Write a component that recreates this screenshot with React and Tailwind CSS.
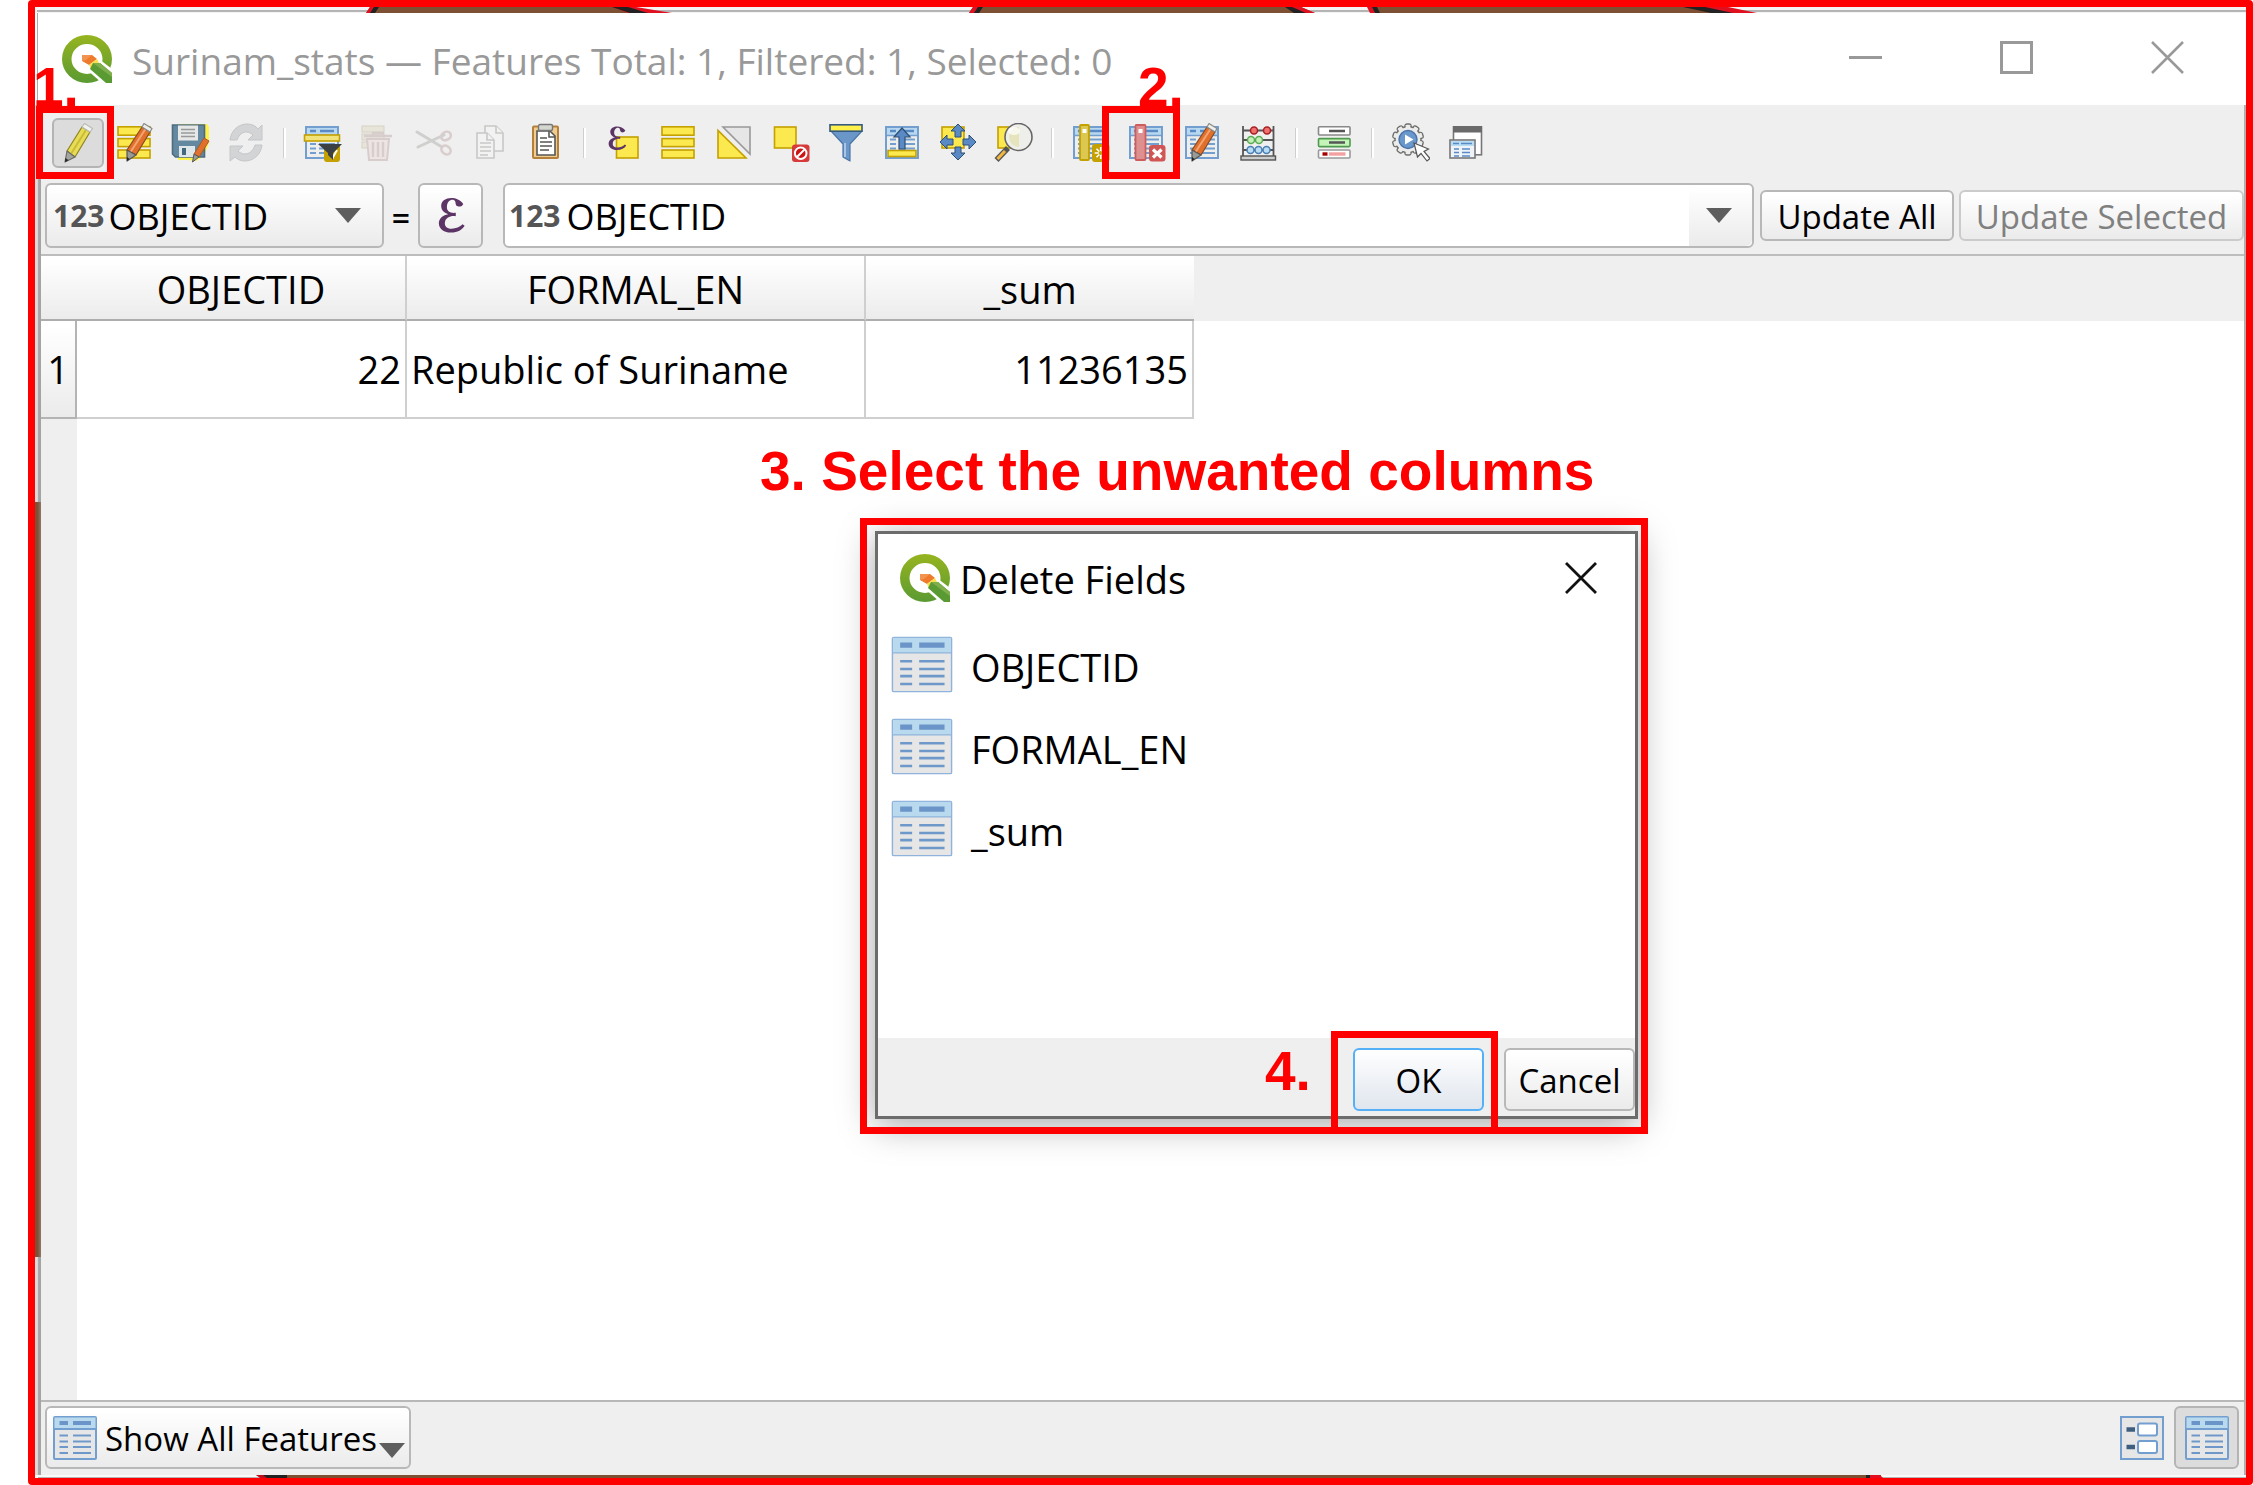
import React from "react";

const YELLOW = "#fce94f";
const GOLD = "#c4a000";
const BLUE = "#729fcf";
const DEEP = "#5a8ac6";

/* ---------- shared drawing parts (40 x 40 grid) ---------- */

function Icon({ children, faded }) {
  return (
    <svg viewBox="0 0 40 40" className={faded ? "size-10 shrink-0 opacity-30" : "size-10 shrink-0"} fill="none" aria-hidden="true">
      {children}
    </svg>
  );
}

function Sheet() {
  return (
    <g>
      <rect x="4" y="4" width="32" height="31" fill="#eeeeec" stroke={BLUE} strokeWidth="2" />
      <rect x="5" y="5" width="30" height="7" fill="#b8d8f0" />
      <path d="M4 12.500h32" stroke={BLUE} strokeWidth="1.500" />
      <path d="M8 8h6M18 8h14" stroke={DEEP} strokeWidth="2.600" />
      <path d="M8 16.500h6M17 16.500h16M8 21h6M17 21h16M8 25.500h6M17 25.500h16M8 30h6M17 30h16" stroke={BLUE} strokeWidth="1.800" />
    </g>
  );
}

function OrangePencil() {
  return (
    <g strokeLinejoin="round">
      <path d="M13 27 28 4l8 5-14 23-9-5z" fill="#e0702c" stroke="#8a4a20" strokeWidth="1.200" />
      <path d="M16.500 29 31.500 6" stroke="#f4a472" strokeWidth="2" />
      <path d="m28 4 2-3.500 8 5L36 9z" fill="#eeeeec" stroke="#888a85" strokeWidth="1.200" />
      <path d="m13 27 9 5-9 6z" fill="#9a9a96" stroke="#555753" strokeWidth="1.200" />
      <path d="m13 34 2.500 2L13 38z" fill="#222" />
    </g>
  );
}

const bars = (
  <g fill={YELLOW} stroke={GOLD} strokeWidth="1.600">
    <rect x="4" y="3.800" width="32" height="8.400" />
    <rect x="4" y="15.600" width="32" height="8" />
    <rect x="4" y="27" width="32" height="8" />
  </g>
);

const arrowPart = "M20 1l7 7h-4v6h-6V8h-4z";

/* ---------- toolbar icons ---------- */

const ToggleEdit = () => (
  <Icon>
    <g strokeLinejoin="round">
      <path d="M9 28 24 4l8 5-15 25-8-6z" fill="#e8dc55" stroke="#8f8420" strokeWidth="1.200" />
      <path d="M13.500 30 28 7" stroke="#c9bc3a" strokeWidth="2" />
      <path d="m24 4 2.500-3.500 8 5L32 9z" fill="#f2f2f0" stroke="#babdb6" strokeWidth="1.200" />
      <path d="m9 28 8 6-10 5z" fill="#a5a5a0" stroke="#6a6c68" strokeWidth="1.200" />
      <path d="m7.500 35 3 2.200L7 39z" fill="#222" />
    </g>
  </Icon>
);
const MultiEdit = () => (
  <Icon>
    {bars}
    <OrangePencil />
  </Icon>
);
const SaveEdits = () => (
  <Icon>
    <path d="M8 1h29l2 3v16l-5 13-8 5-8-1H8z" fill="#fff34a" />
    <path d="M2.500 2h32v32H5.500l-3-3z" fill="#6488a0" stroke="#4d6c80" strokeWidth="1.600" />
    <rect x="8" y="2.500" width="20" height="15" fill="#e6e8e8" />
    <path d="M11 6.500h14M11 10h14M11 13.500h14" stroke="#999" strokeWidth="1.300" />
    <rect x="9" y="23" width="16" height="11" fill="#dfe6ea" />
    <rect x="12" y="25" width="4" height="7" fill="#44697e" />
    <path d="M24 31 34 15l5 3-10 16z" fill="#e0702c" stroke="#a85a2a" strokeLinejoin="round" />
    <path d="m24 31 5 3-6.500 5z" fill="#9a9a96" stroke="#555753" />
  </Icon>
);
const Reload = () => (
  <Icon>
    <g fill="#d2d4d6" stroke="#c4c6c8" strokeWidth="1" strokeLinejoin="round">
      <path d="M4 17C5 7 13 1 21 1c5 0 9 2 11 5l4-4v15H22l5-5c-5-5-13-4-16 5z" />
      <path d="M36 22c-1 10-9 16-17 16-5 0-8-2-10-4l-5 4V23h13l-5 5c5 5 14 4 17-6z" />
    </g>
  </Icon>
);
const SelectForm = () => (
  <Icon>
    <Sheet />
    <rect x="2.500" y="12" width="35" height="6" fill="#f2e27a" stroke={GOLD} strokeWidth="1.600" />
    <rect x="22" y="21" width="16" height="18" rx="3" fill={GOLD} />
    <path d="M30 36l5-9" stroke="#fff" strokeWidth="2" />
    <path d="M16 21h24l-9 9v7l-5-5v-2z" fill="#3a4044" />
  </Icon>
);
const Trash = () => (
  <Icon faded>
    <rect x="4" y="3" width="22" height="6" fill="#d8d0a8" stroke="#a09060" />
    <rect x="4" y="11" width="22" height="6" fill="#d8d0a8" stroke="#a09060" />
    <rect x="4" y="19" width="22" height="6" fill="#d8d0a8" stroke="#a09060" />
    <path d="M9 16h22l-2 21H11z" fill="#eecccc" stroke="#a48080" strokeWidth="2" />
    <path d="M6 13h28M15 10h10v3H15zM15 19v15M20 19v15M25 19v15" stroke="#a48080" strokeWidth="2.400" />
  </Icon>
);
const Cut = () => (
  <Icon faded>
    <path d="M3 9 28 24M4 24l26-12" stroke="#888a85" strokeWidth="3" strokeLinecap="round" />
    <ellipse cx="32" cy="13" rx="5" ry="4" stroke="#a88080" strokeWidth="2.600" transform="rotate(-30 32 13)" />
    <ellipse cx="32" cy="27" rx="5" ry="4" stroke="#a88080" strokeWidth="2.600" transform="rotate(40 32 27)" />
  </Icon>
);
const Copy = () => (
  <Icon faded>
    <g fill="#fafafa" stroke="#6e706c" strokeWidth="1.600">
      <path d="M15 3h11l7 7v18H15z" />
      <path d="M26 3v7h7M7 10h10l7 7v18H7z" />
      <path d="M17 10v7h7" />
    </g>
    <path d="M10 20h11M10 24h11M10 28h11M10 32h8" stroke="#6e706c" strokeWidth="1.600" />
  </Icon>
);
const Paste = () => (
  <Icon>
    <rect x="7" y="3.500" width="25" height="31.500" rx="1" fill="#f0cc90" stroke="#b5803a" strokeWidth="2" />
    <path d="M11 8h13l5 5v19H11z" fill="#fff" stroke="#555753" strokeWidth="1.600" />
    <path d="M23 8v6h6" stroke="#555753" strokeWidth="1.600" />
    <rect x="12.500" y="1.500" width="14" height="6" rx="1.500" fill="#d3d7cf" stroke="#777" strokeWidth="1.400" />
    <path d="M14 15h7M14 19h12M14 23h12M14 27h9" stroke="#555753" strokeWidth="1.500" />
  </Icon>
);
const EPS = "M24 6C19-1 6 1 8 9c.5 2.500 3 4 5 4.500C3 15 4 27 15 27c5 0 8-2 10-5l-1.500-1C20 25 10 26 10.500 20c.3-4 4-5.500 8-5v-2.500c-4 .5-6.500-1-6.500-4C12 2.500 17 2 18 4c.7 1.500 0 3 2 3.800 1.600.5 3.500-.3 4-1.800z";
const SelectExpr = () => (
  <Icon>
    <rect x="14.500" y="14" width="21.500" height="21" fill={YELLOW} stroke={GOLD} strokeWidth="1.600" />
    <path d={EPS} fill="#5c3566" transform="translate(1 2) scale(.93)" />
  </Icon>
);
const SelectAll = () => <Icon>{bars}</Icon>;
const Invert = () => (
  <Icon>
    <path d="M9 4h27v27z" fill="#e6e6e6" stroke="#999" strokeWidth="1.600" />
    <path d="M4 7.500V35h28z" fill={YELLOW} stroke={GOLD} strokeWidth="1.600" />
  </Icon>
);
const Deselect = () => (
  <Icon>
    <rect x="4.500" y="4" width="21.500" height="21" fill={YELLOW} stroke={GOLD} strokeWidth="1.600" />
    <rect x="22" y="21.500" width="17.500" height="17.500" rx="3" fill="#d63a3a" />
    <circle cx="30.700" cy="30.200" r="5.800" fill="#cc1414" stroke="#fff" strokeWidth="2" />
    <path d="m27 34 7.500-7.500" stroke="#fff" strokeWidth="2" />
  </Icon>
);
const Filter = () => (
  <Icon>
    <path d="M5 8h31L24 21v17l-7-4V21z" fill="#6a97c8" stroke="#4a76a8" strokeWidth="1.200" strokeLinejoin="round" />
    <path d="M19 20v14" stroke="#a9c6e4" strokeWidth="2" />
    <rect x="4" y="1.800" width="32" height="6.400" fill="#fff04a" stroke="#35597f" strokeWidth="1.600" />
  </Icon>
);
const MoveTop = () => (
  <Icon>
    <Sheet />
    <rect x="6" y="27.500" width="28" height="6" fill={YELLOW} stroke={GOLD} strokeWidth="1.600" />
    <path d="M20 5l8 9h-5v12h-6V14h-5z" fill={DEEP} stroke="#2f4f73" strokeWidth="1.200" />
  </Icon>
);
const PanTo = () => (
  <Icon>
    <rect x="4" y="4" width="22" height="21" fill={YELLOW} stroke={GOLD} strokeWidth="1.600" />
    <g fill={DEEP} stroke="#2f4f73" strokeWidth="1">
      <path d={arrowPart} />
      <path d={arrowPart} transform="rotate(90 20 19)" />
      <path d={arrowPart} transform="rotate(180 20 19)" />
      <path d={arrowPart} transform="rotate(270 20 19)" />
    </g>
  </Icon>
);
const ZoomTo = () => (
  <Icon>
    <rect x="4" y="4" width="22" height="21" fill={YELLOW} stroke={GOLD} strokeWidth="1.600" />
    <path d="M2.500 37 14 25" stroke="#555" strokeWidth="5.500" />
    <path d="M3.500 36 11 28" stroke="#f0b840" strokeWidth="3" />
    <circle cx="24.500" cy="14" r="13.500" fill="#eeeeea" stroke="#666" strokeWidth="1.600" />
    <path d="M25 4v20a10 10 0 0 1-10-10 10 10 0 0 1 10-10z" fill="#e6e4bc" />
    <ellipse cx="20" cy="8" rx="6" ry="4" fill="#fff" opacity=".7" />
  </Icon>
);
const NewField = () => (
  <Icon>
    <Sheet />
    <rect x="10" y="2" width="9" height="35" rx="1" fill="#dcc850" stroke={GOLD} strokeWidth="1.800" />
    <rect x="12.500" y="6" width="4" height="4" fill="#fff" />
    <rect x="22" y="21" width="17.500" height="18" rx="3" fill={GOLD} />
    <path d="M30.700 24v12M24.700 30h12M26.500 25.800l8.500 8.500M35 25.800l-8.500 8.500" stroke="#fff" strokeWidth="1.600" />
    <circle cx="30.700" cy="30" r="2" fill={GOLD} />
  </Icon>
);
const DeleteField = () => (
  <Icon>
    <Sheet />
    <rect x="9.500" y="2" width="10" height="35" rx="1" fill="#de9090" stroke="#cf5c5c" strokeWidth="1.800" />
    <rect x="12.500" y="6" width="4" height="4" fill="#fff" />
    <rect x="23" y="22" width="16.500" height="16.500" rx="3" fill="#d25555" />
    <path d="m27 26.500 8.500 8M35.500 26.500l-8.500 8" stroke="#fff" strokeWidth="3.200" />
  </Icon>
);
const OrganizeCols = () => (
  <Icon>
    <Sheet />
    <g transform="translate(-3 0)">
      <OrangePencil />
    </g>
  </Icon>
);
const Calculator = () => (
  <Icon>
    <path d="M5 3v31M35.500 3v31M5 7.500h30M5 17h30M5 27h30" stroke="#555" strokeWidth="1.800" />
    <rect x="3" y="33" width="34.500" height="4" fill="#ccc" stroke="#555" strokeWidth="1.400" />
    <g strokeWidth="1.500">
      <circle cx="16" cy="7.500" r="3.500" fill="#f07070" stroke="#a82020" />
      <circle cx="29" cy="7.500" r="3.500" fill="#f07070" stroke="#a82020" />
      <circle cx="13" cy="17" r="3.500" fill="#c4f0b8" stroke="#5cab55" />
      <circle cx="21" cy="17" r="3.500" fill="#c4f0b8" stroke="#5cab55" />
      <circle cx="12.500" cy="27" r="3.500" fill="#b8dcf4" stroke="#4a7fb5" />
      <circle cx="20.500" cy="27" r="3.500" fill="#b8dcf4" stroke="#4a7fb5" />
      <circle cx="28.500" cy="27" r="3.500" fill="#b8dcf4" stroke="#4a7fb5" />
    </g>
  </Icon>
);
const Conditional = () => (
  <Icon>
    <g strokeWidth="1.600">
      <rect x="4.500" y="3.800" width="31.500" height="8.200" rx="1" fill="#fff" stroke="#888" />
      <rect x="4.500" y="15.600" width="31.500" height="8" rx="1" fill="#c4f4b8" stroke="#4e9a4e" />
      <rect x="4.500" y="27" width="31.500" height="8" rx="1" fill="#fff" stroke="#999" />
    </g>
    <path d="M15 8h16M15 19.500h16" stroke="#555" strokeWidth="2.600" />
    <path d="M8.500 31h5" stroke="#a40000" strokeWidth="3.400" />
    <path d="M15 31h16.500" stroke="#f4a0a0" strokeWidth="3.400" />
  </Icon>
);
const GEAR_ANGLES = [0, 36, 72, 108, 144, 180, 216, 252, 288, 324];
const Action = () => (
  <Icon>
    <g fill="#ececec" stroke="#6e706c" strokeWidth="1.400">
      {GEAR_ANGLES.map((a) => (
        <rect key={a} x="15" y="1" width="6" height="6" rx="2" transform={`rotate(${a} 18 16.500)`} />
      ))}
      <circle cx="18" cy="16.500" r="13" />
    </g>
    <g fill="#ececec">
      {GEAR_ANGLES.map((a) => (
        <rect key={a} x="15.700" y="2" width="4.600" height="6" transform={`rotate(${a} 18 16.500)`} />
      ))}
    </g>
    <circle cx="18" cy="16.500" r="9" fill="#6a97cc" stroke="#4a74a8" strokeWidth="1.400" />
    <path d="m15 11.500 8.500 5-8.500 5z" fill="#fff" />
    <path d="m24 20 3.500 14 3.500-3.500 6 7.500 3-2.500-6-7 4.500-2.500z" fill="#fff" stroke="#555" strokeWidth="1.200" />
  </Icon>
);
const Dock = () => (
  <Icon>
    <rect x="7.500" y="3.800" width="28" height="28" fill="#fff" stroke="#777" strokeWidth="1.600" />
    <rect x="7" y="3" width="29" height="6.500" fill="#6a6a6a" />
    <rect x="4" y="17" width="25" height="18" fill="#eef3f8" stroke="#777" strokeWidth="1.600" />
    <rect x="5" y="18" width="23" height="5" fill="#b8dcf4" />
    <path d="M7 20.500h6M15 20.500h11M8 26h5M16 26h8M8 29.500h5M16 29.500h8M8 33h5M16 33h8" stroke={DEEP} strokeWidth="1.700" />
  </Icon>
);

const TOOL_GROUPS = [
  [
    ["Toggle editing mode", ToggleEdit],
    ["Toggle multi edit mode", MultiEdit],
    ["Save edits", SaveEdits],
    ["Reload the table", Reload],
  ],
  [
    ["Add feature", SelectForm],
    ["Delete selected features", Trash],
    ["Cut", Cut],
    ["Copy", Copy],
    ["Paste", Paste],
  ],
  [
    ["Select by expression", SelectExpr],
    ["Select all", SelectAll],
    ["Invert selection", Invert],
    ["Deselect all", Deselect],
    ["Filter by form", Filter],
    ["Move selection to top", MoveTop],
    ["Pan to selection", PanTo],
    ["Zoom to selection", ZoomTo],
  ],
  [
    ["New field", NewField],
    ["Delete field", DeleteField],
    ["Organize columns", OrganizeCols],
    ["Open field calculator", Calculator],
  ],
  [["Conditional formatting", Conditional]],
  [
    ["Actions", Action],
    ["Dock attribute table", Dock],
  ],
];

function QgisLogo() {
  return (
    <svg viewBox="0 0 50 48" className="h-12 w-[50px] shrink-0" fill="none" aria-hidden="true">
      <defs>
        <linearGradient id="ring" x1="0" y1="0" x2="0" y2="1">
          <stop offset="0" stopColor="#97b41f" />
          <stop offset="1" stopColor="#5a9a32" />
        </linearGradient>
      </defs>
      <path
        fillRule="evenodd"
        fill="url(#ring)"
        d="M25 0a25 24 0 1 1 0 48a25 24 0 1 1 0-48zM25 9a15.500 15 0 1 0 0 30a15.500 15 0 1 0 0-30z"
      />
      <path d="m24 34 13-10 13 10v14H40z" fill="#fff" />
      <path d="M20 20h10l5 4-8 6-7-4z" fill="#ee7a2c" />
      <path d="M20 20h10l-6 5-4 1z" fill="#f39350" />
      <path d="m27 30 8-6 2 4-8 6z" fill="#f8e04a" />
      <path d="m28 34 3-6h7l12 10v10h-6z" fill="#5a9a32" />
      <path d="m31 28 7 0 12 10v4z" fill="#7fae4c" />
    </svg>
  );
}

function TableIcon({ wide }) {
  return (
    <svg
      viewBox="0 0 44 44"
      preserveAspectRatio="none"
      className={wide ? "h-[57px] w-[62px] shrink-0" : "size-11 shrink-0"}
      fill="none"
      aria-hidden="true"
    >
      <rect x="1" y="1" width="42" height="42" rx="1" fill="#e6e6e6" stroke={wide ? "#8fb3dc" : BLUE} strokeWidth={wide ? 1 : 2} />
      <rect x="1.500" y="1.500" width="41" height="11.500" fill="#b9d9ee" />
      <path d="M1 13h42" stroke={wide ? "#8fb3dc" : BLUE} strokeWidth={wide ? 1 : 2} />
      <path d="M6.500 7H15M20 7h18" stroke="#6b95c8" strokeWidth="4" />
      <path d="M6.500 19.500H15M20 19.500h18M6.500 25.500H15M20 25.500h18M6.500 31H15M20 31h18M6.500 37H15M20 37h18" stroke="#6f98ca" strokeWidth="2" />
    </svg>
  );
}

const Arrow = () => (
  <svg viewBox="0 0 26 15" className="pointer-events-none h-[15px] w-[26px] shrink-0" aria-hidden="true">
    <path d="M0 0h26L13 15z" fill="#5e5e5e" />
  </svg>
);

const Num = () => (
  <span className="shrink-0 text-[30px] leading-none font-bold text-[#555]" aria-hidden="true">
    123
  </span>
);

const FACE = "bg-linear-to-b from-white from-5% to-[#ebebeb]";

function StepText({ className, children }) {
  return (
    <p className={`absolute font-['Liberation_Sans',Arial,sans-serif] text-[55px] leading-[55px] font-bold whitespace-nowrap text-[#f00] ${className}`}>
      {children}
    </p>
  );
}

function TitleBar() {
  return (
    <header className="flex h-[92px] items-center bg-white pl-[21px]">
      <QgisLogo />
      <h1 className="ml-5 flex-1 pt-[2px] text-[37px] leading-none whitespace-nowrap text-[#999]">
        Surinam_stats — Features Total: 1, Filtered: 1, Selected: 0
      </h1>
      <div className="mr-[60px] flex items-center gap-[118px] pb-1">
        <button aria-label="Minimize" className="size-[33px]">
          <svg viewBox="0 0 33 33" fill="none" stroke="#999" strokeWidth="3">
            <path d="M0 16.500h33" />
          </svg>
        </button>
        <button aria-label="Maximize" className="size-[33px]">
          <svg viewBox="0 0 33 33" fill="none" stroke="#999" strokeWidth="3">
            <path d="M1.500 1.500h30v30h-30z" />
          </svg>
        </button>
        <button aria-label="Close" className="size-[33px]">
          <svg viewBox="0 0 33 33" fill="none" stroke="#999" strokeWidth="2.500">
            <path d="m1 1 31 31M32 1 1 32" />
          </svg>
        </button>
      </div>
    </header>
  );
}

function Toolbar() {
  return (
    <div role="toolbar" aria-label="Attribute table tools" className="flex h-[78px] items-center gap-1 pb-[2px] pl-[11px]">
      {TOOL_GROUPS.map((group, g) => (
        <React.Fragment key={g}>
          {g > 0 && (
            <span className="flex w-4 justify-center">
              <span className="h-[30px] w-[3px] border-r-2 border-l border-r-white border-l-[#cfcfcf]" />
            </span>
          )}
          {group.map(([label, Glyph], i) => (
            <button
              key={label}
              aria-label={label}
              className={
                g === 0 && i === 0
                  ? "flex h-[50px] w-[52px] items-center justify-center rounded-md border-2 border-[#b4b4b4] bg-[#dcdcdc]"
                  : "flex h-[50px] w-[52px] items-center justify-center"
              }
            >
              <Glyph />
            </button>
          ))}
        </React.Fragment>
      ))}
    </div>
  );
}

function FieldBar() {
  return (
    <div className="flex items-center pb-[6px] pl-1 text-[36px] leading-none">
      <div className={`flex h-[65px] w-[339px] items-center rounded-md border-2 border-[#b8b8b8] pl-[6px] ${FACE}`}>
        <Num />
        <select aria-label="Field to update" className="-mr-12 ml-1 h-full min-w-0 flex-1 appearance-none bg-transparent pt-[2px] leading-[50px]">
          <option>OBJECTID</option>
        </select>
        <span className="pointer-events-none mr-[21px]">
          <Arrow />
        </span>
      </div>
      <span className="w-[34px] pt-1 text-center text-[32px] font-semibold">=</span>
      <button aria-label="Expression" className={`flex h-[65px] w-[65px] items-center justify-center rounded-md border-2 border-[#b8b8b8] ${FACE}`}>
        <svg viewBox="4 1 22 27" className="h-[37px] w-[30px]" aria-hidden="true">
          <path d={EPS} fill="#5c3566" />
        </svg>
      </button>
      <div className="ml-5 flex h-[65px] flex-1 items-center rounded-md border-2 border-[#b8b8b8] bg-white pl-1">
        <Num />
        <select aria-label="Expression value" className="ml-[6px] h-full min-w-0 flex-1 appearance-none bg-transparent pt-[2px] leading-[50px]">
          <option>OBJECTID</option>
        </select>
        <span className={`flex h-full w-[63px] items-center justify-center rounded-r-md pr-1 ${FACE}`}>
          <Arrow />
        </span>
      </div>
      <button className={`ml-[6px] h-[51px] w-[194px] rounded-md border-2 border-[#b8b8b8] pt-[2px] text-[33px] leading-none whitespace-nowrap ${FACE}`}>Update All</button>
      <button disabled className={`ml-[5px] h-[51px] w-[285px] rounded-md border-2 border-[#cbcbcb] pt-[2px] text-[33px] leading-none whitespace-nowrap text-[#808080] ${FACE}`}>
        Update Selected
      </button>
    </div>
  );
}

function FeatureTable() {
  const head = "h-[65px] border-b-2 border-[#adadad] p-0 pt-[2px] text-center font-normal";
  const split = "border-r-2 border-r-[#cfcfcf]";
  return (
    <div className="flex flex-1 flex-col border-t-2 border-[#bdbdbd] bg-white">
      <div className="bg-[linear-gradient(#efefef,#efefef)] bg-[length:100%_65px] bg-no-repeat">
        <table className="w-[1153px] table-fixed border-separate border-spacing-0 text-[38px] leading-none">
          <colgroup>
            <col className="w-[36px]" />
            <col className="w-[330px]" />
            <col className="w-[459px]" />
            <col className="w-[328px]" />
          </colgroup>
          <thead>
            <tr className={FACE}>
              <td className={head} />
              <th className={`${head} ${split}`}>OBJECTID</th>
              <th className={`${head} ${split}`}>FORMAL_EN</th>
              <th className={head}>_sum</th>
            </tr>
          </thead>
          <tbody>
            <tr>
              <th className={`h-[98px] border-r-2 border-b-2 border-[#b4b4b4] p-0 text-center font-normal ${FACE}`}>1</th>
              <td className="border-r-2 border-b-2 border-[#cfcfcf] bg-white p-0 pr-1 text-right">22</td>
              <td className="border-r-2 border-b-2 border-[#cfcfcf] bg-white p-0 pl-1">Republic of Suriname</td>
              <td className="border-r-2 border-b-2 border-[#cfcfcf] bg-white p-0 pr-1 text-right">11236135</td>
            </tr>
          </tbody>
        </table>
      </div>
      <div className="w-[36px] flex-1 bg-[#efefef]" />
    </div>
  );
}

function StatusBar() {
  return (
    <footer className="flex h-[75px] items-center border-t-2 border-[#b8b8b8] pr-[5px] pb-[2px] pl-1">
      <button className={`flex h-[63px] items-center rounded-md border-2 border-[#b8b8b8] pr-1 pl-[6px] text-[33px] leading-none whitespace-nowrap ${FACE}`}>
        <TableIcon />
        <span className="mr-[2px] ml-2 pt-[2px]">Show All Features</span>
        <span className="self-end pb-[9px]">
          <Arrow />
        </span>
      </button>
      <div className="ml-auto flex items-center gap-[10px]">
        <button aria-label="Form view">
          <svg viewBox="0 0 44 44" className="size-11" fill="none" aria-hidden="true">
            <rect x="1" y="1" width="42" height="42" fill="#e6e6e6" stroke={BLUE} strokeWidth="2" />
            <g fill="#fff" stroke={BLUE} strokeWidth="2">
              <rect x="18" y="7.500" width="19" height="12" rx="2" />
              <rect x="18" y="25" width="19" height="12" rx="2" />
            </g>
            <path d="M6.500 13.500H15M6.500 31H15" stroke="#3f5f80" strokeWidth="4.500" />
          </svg>
        </button>
        <button aria-label="Table view" aria-pressed="true" className="flex h-[63px] w-[65px] items-center justify-center rounded-md border-2 border-[#b4b4b4] bg-[#dcdcdc]">
          <TableIcon />
        </button>
      </div>
    </footer>
  );
}

function DeleteFieldsDialog() {
  return (
    <section
      role="dialog"
      aria-label="Delete Fields"
      className="absolute top-[531px] left-[875px] flex h-[588px] w-[763px] flex-col border-[3px] border-[#6c6c6c] bg-white text-[38px] leading-none shadow-[0_6px_34px_rgba(0,0,0,0.35)]"
    >
      <div className="flex h-[90px] items-center pr-[38px] pb-[2px] pl-[22px]">
        <QgisLogo />
        <h2 className="ml-[10px] flex-1 pt-[2px]">Delete Fields</h2>
        <button aria-label="Close dialog" className="size-8">
          <svg viewBox="0 0 32 32" fill="none" stroke="#111" strokeWidth="2.800">
            <path d="m1 1 30 30M31 1 1 31" />
          </svg>
        </button>
      </div>
      <ul role="listbox" aria-label="Fields" className="flex-1 pl-[13px]">
        {["OBJECTID", "FORMAL_EN", "_sum"].map((name) => (
          <li key={name} role="option" aria-selected="false" className="flex h-[82px] items-center gap-[18px] pb-[2px]">
            <TableIcon wide />
            <span className="pt-[6px]">{name}</span>
          </li>
        ))}
      </ul>
      <div className="flex h-[78px] items-center justify-end gap-5 bg-[#efefef] pt-1 text-[33px]">
        <button className="h-[63px] w-[131px] rounded-md border-2 border-[#55b0f8] bg-linear-to-b from-white to-[#e0e6ee] pt-[2px] leading-none">OK</button>
        <button className={`h-[63px] w-[131px] rounded-md border-2 border-[#b8b8b8] pt-[2px] leading-none ${FACE}`}>Cancel</button>
      </div>
    </section>
  );
}

/* Slivers of the map canvas that show round the window */
const TopSliver = () => (
  <svg viewBox="0 0 2211 6" preserveAspectRatio="none" className="h-[6px] w-full shrink-0" aria-hidden="true">
    <path d="M0 0h2211v6H0z" fill="#f4f4f4" />
    <path d="M2 3h2209v2H2z" fill="#b4b4b4" />
    <g>
      <path d="M335 0h255l44 6H331z" fill="#7d5033" />
      <path d="M335 0h4l-4 6h-4z" fill="#e01020" />
      <path d="M339 0h5l-4 6h-5z" fill="#222" />
      <path d="M577 0h24l36 6h-44z" fill="#e01020" />
      <path d="M577 0h16l20 6h-18z" fill="#222" />
      <path d="M938 0h328l14 6H934z" fill="#7d5033" />
      <path d="M938 0h5l-4 6h-5z" fill="#e01020" />
      <path d="M943 0h5l-4 6h-5z" fill="#222" />
      <path d="M1250 0h16l14 6h-15z" fill="#e01020" />
      <path d="M1250 0h7l14 6h-12z" fill="#222" />
      <path d="M1334 0h330l50 6h-374z" fill="#7d5033" />
      <path d="M1332 0h5l3 6h-5z" fill="#e01020" />
      <path d="M1337 0h5l3 6h-5z" fill="#222" />
      <path d="M1648 0h45l29 6h-30z" fill="#e01020" />
      <path d="M1648 0h22l28 6h-22z" fill="#222" />
    </g>
  </svg>
);
const BottomSliver = () => (
  <svg viewBox="0 0 2211 3" preserveAspectRatio="none" className="h-[3px] w-full shrink-0" aria-hidden="true">
    <path d="M0 0h2211v3H0z" fill="#fafafa" />
    <path d="M3 2h2208v1H3z" fill="#b4b4b4" />
    <path d="M221 0h1625v3H227z" fill="#7d5033" />
    <path d="M221 0h31v3h-27z" fill="#c01020" />
    <path d="M228 0h24v3h-20z" fill="#222" />
    <path d="M1831 0h14l3 3h-17z" fill="#e01020" />
    <path d="M1831 0h4v3h-4z" fill="#222" />
  </svg>
);

export default function App() {
  return (
    <div className="relative flex min-h-screen bg-white pl-7 font-['Open_Sans','Noto_Sans',sans-serif] text-black">
      <div className="flex min-w-0 flex-1 flex-col rounded-[4px] border-[7px] border-[#f00] bg-white">
        <TopSliver />
        <div className="flex flex-1">
          <div className="flex w-[6px] flex-col" aria-hidden="true">
            <div className="ml-[2px] h-[92px] border-l border-[#aaa]" />
            <div className="flex-[397] bg-linear-to-r from-[#dcdcdc] from-40% to-[#a4a4a4] to-60%" />
            <div className="flex-[755] bg-linear-to-r from-[#7d5033] from-40% to-[#8d7868]" />
            <div className="flex-[218] bg-linear-to-r from-[#dcdcdc] from-40% to-[#a4a4a4] to-60%" />
          </div>
          <main className="flex min-w-0 flex-1 flex-col bg-[#efefef]">
            <TitleBar />
            <Toolbar />
            <FieldBar />
            <FeatureTable />
            <StatusBar />
          </main>
          <div className="mt-[92px] w-[2px] bg-[#b0b0b0]" aria-hidden="true" />
        </div>
        <BottomSliver />
      </div>

      <DeleteFieldsDialog />

      <StepText className="top-[60px] left-[33px]">1.</StepText>
      <div className="pointer-events-none absolute top-[106px] left-[36px] h-[73px] w-[78px] border-[7px] border-[#f00]" />
      <StepText className="top-[60px] left-[1138px]">2.</StepText>
      <div className="pointer-events-none absolute top-[106px] left-[1102px] h-[73px] w-[78px] border-[7px] border-[#f00]" />
      <StepText className="top-[444px] left-[760px]">3. Select the unwanted columns</StepText>
      <div className="pointer-events-none absolute top-[518px] left-[860px] h-[616px] w-[788px] border-[7px] border-[#f00]" />
      <StepText className="top-[1044px] left-[1265px]">4.</StepText>
      <div className="pointer-events-none absolute top-[1031px] left-[1331px] h-[103px] w-[167px] border-[7px] border-[#f00]" />
    </div>
  );
}
